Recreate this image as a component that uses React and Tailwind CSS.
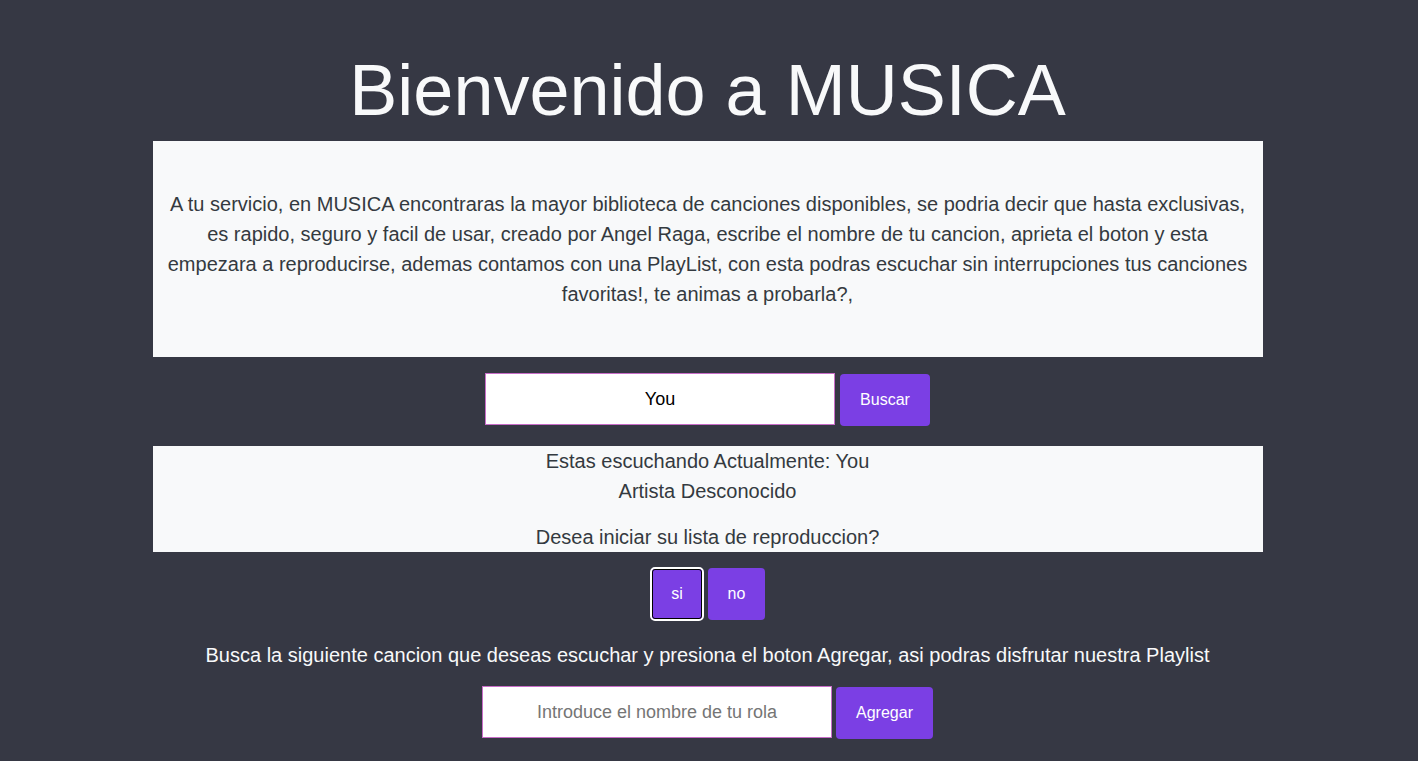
export default function App() {
  const font = { fontFamily: '"Liberation Sans", Arial, sans-serif' };
  return (
    <div className="flex min-h-[761px] w-full justify-center bg-[#363844] pr-[3px] text-center" style={font}>
      <div className="w-[1110px] pt-[47px]">
        <h1 className="mb-2 text-[72px] leading-[1.2] font-normal text-[#f8f9fa]">Bienvenido a MUSICA</h1>
        <div className="bg-[#f8f9fa] px-[14px] py-12 text-[20px] leading-[30px] text-[#343a40]">
          A tu servicio, en MUSICA encontraras la mayor biblioteca de canciones disponibles, se podria decir que hasta exclusivas, es rapido, seguro y facil de usar, creado por Angel Raga, escribe el nombre de tu cancion, aprieta el boton y esta empezara a reproducirse, ademas contamos con una PlayList, con esta podras escuchar sin interrupciones tus canciones favoritas!, te animas a probarla?,
        </div>
        <div className="mt-4 flex items-start justify-center gap-[5px]">
          <input
            defaultValue="You"
            className="h-[52px] w-[350px] border border-[#c86dc8] bg-white text-center text-[18px] text-black outline-none"
            style={font}
          />
          <button className="mt-px h-[52px] w-[90px] rounded bg-[#7b3fe4] text-[16px] text-white" style={font}>
            Buscar
          </button>
        </div>
        <div className="mt-5 bg-[#f8f9fa] text-[20px] leading-[30px] text-[#343a40]">
          <p>Estas escuchando Actualmente: You</p>
          <p className="mb-4">Artista Desconocido</p>
          <p>Desea iniciar su lista de reproduccion?</p>
        </div>
        <div className="mt-[15px] flex items-start justify-center gap-[4px]">
          <button className="h-[54px] w-[54px] rounded-[5px] border-2 border-white bg-[#7b3fe4] text-[16px] text-white outline outline-1 outline-offset-[-3px] outline-black" style={font}>
            si
          </button>
          <button className="mt-px h-[52px] w-[57px] rounded bg-[#7b3fe4] text-[16px] text-white" style={font}>
            no
          </button>
        </div>
        <p className="mt-[19px] text-[20px] leading-[30px] text-[#f8f9fa]">
          Busca la siguiente cancion que deseas escuchar y presiona el boton Agregar, asi podras disfrutar nuestra Playlist
        </p>
        <div className="mt-4 flex items-start justify-center gap-[4px]">
          <input
            placeholder="Introduce el nombre de tu rola"
            className="h-[52px] w-[350px] border border-[#c86dc8] bg-white text-center text-[18px] text-black outline-none placeholder:text-[#757575]"
            style={font}
          />
          <button className="mt-px h-[52px] w-[97px] rounded bg-[#7b3fe4] text-[16px] text-white" style={font}>
            Agregar
          </button>
        </div>
      </div>
    </div>
  );
}
